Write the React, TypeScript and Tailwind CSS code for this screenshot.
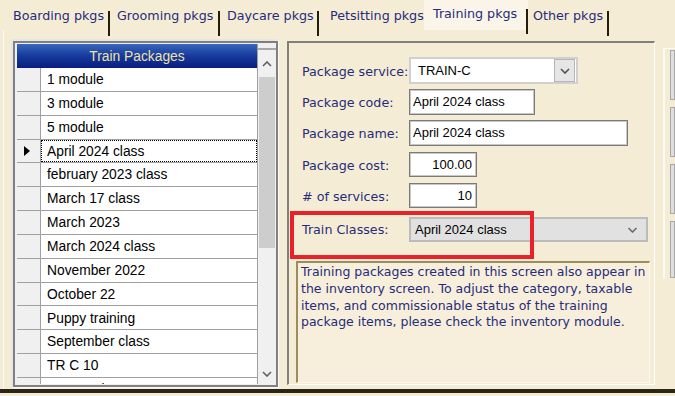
import React from "react";

const tabs = [
  { label: "Boarding pkgs", cls: "w-[110px] pl-[13px] pt-[8px]", sep: true, active: false },
  { label: "Grooming pkgs", cls: "w-[110px] pl-[7px] pt-[8px]", sep: true, active: false },
  { label: "Daycare pkgs", cls: "w-[99px] pl-[7px] pt-[8px]", sep: true, active: false },
  { label: "Petsitting pkgs", cls: "w-[105px] pl-[11px] pt-[8px]", sep: false, active: false },
  { label: "Training pkgs", cls: "w-[104px] pl-[9px] pt-[6px] bg-[#faf5e8]", sep: true, active: true },
  { label: "Other pkgs", cls: "w-[81px] pl-[5px] pt-[8px]", sep: true, active: false },
];

const rows = [
  "1 module",
  "3 module",
  "5 module",
  "April 2024 class",
  "february 2023 class",
  "March 17 class",
  "March 2023",
  "March 2024 class",
  "November 2022",
  "October 22",
  "Puppy training",
  "September class",
  "TR C 10",
  "TR C 1 class",
];

function Chevron({ up = false, className = "" }: { up?: boolean; className?: string }) {
  return (
    <svg width="10" height="6" viewBox="0 0 10 6" className={className}>
      <polyline
        points={up ? "1,5 5,1 9,5" : "1,1 5,5 9,1"}
        fill="none"
        stroke="currentColor"
        strokeWidth="1.6"
      />
    </svg>
  );
}

export default function App() {
  return (
    <div className="w-[675px] h-[396px] overflow-hidden bg-[#f5ecd6] flex flex-col font-['DejaVu_Sans',sans-serif] text-[12.7px] text-[#262c78]">
      {/* Tabs */}
      <div className="h-[30px] flex shrink-0">
        {tabs.map((t) => (
          <div key={t.label} className={`flex h-full leading-[15px] whitespace-nowrap ${t.cls}`}>
            <span className="flex-1">{t.label}</span>
            {t.sep && <span className="w-[2px] h-[25px] mt-[3px] bg-[#241c0c] shrink-0" />}
          </div>
        ))}
      </div>

      {/* Body */}
      <div className="flex h-[359px] shrink-0 border-l border-[#fffaf0] ml-[3px]">
        {/* Grid */}
        <div className="ml-[7px] mt-[9px] w-[268px] h-[349px] border-l-2 border-t-2 border-r border-b border-l-[#e6e6e6] border-t-[#e6e6e6] border-r-[#fafafa] border-b-[#fafafa] shrink-0">
          <div className="h-full border-2 border-[#808080] bg-[#f0f0f0] pl-[2px] pt-[1px] pb-[1px] flex">
            <div className="w-[241px] h-full overflow-hidden flex flex-col font-['Liberation_Sans',Arial,sans-serif] text-[13.8px] text-black">
              <div className="h-[24px] shrink-0 bg-gradient-to-b from-[#3a66bc] via-[#163a9c] to-[#0a1d80] text-[#f0e2a2] flex items-center justify-center pt-[2px] border-r border-[#a0a0a0]">
                Train Packages
              </div>
              {rows.map((r, i) => (
                <div key={r} className="flex h-[23.85px] shrink-0">
                  <div className="w-[24px] bg-[#f0f0f0] border-r border-b border-[#a0a0a0] flex items-center justify-center shrink-0">
                    {i === 3 && (
                      <svg width="6" height="10" viewBox="0 0 6 10" className="-ml-[4px]">
                        <polygon points="0,0 6,5 0,10" fill="#000" />
                      </svg>
                    )}
                  </div>
                  <div className="flex-1 bg-white border-r border-b border-[#a0a0a0] flex items-center">
                    {i === 3 ? (
                      <div className="w-full h-full border border-dotted border-black flex items-center pl-[5px] pt-[2px]">
                        {r}
                      </div>
                    ) : (
                      <span className="pl-[6px] pt-[2px] whitespace-nowrap">{r}</span>
                    )}
                  </div>
                </div>
              ))}
            </div>
            {/* Scrollbar */}
            <div className="w-[18px] h-full flex flex-col bg-[#f0f0f0]">
              <div className="h-[4px] shrink-0" />
              <div className="h-[2px] bg-[#a8a8a8] shrink-0" />
              <div className="h-[27px] shrink-0 flex items-center justify-center text-[#606060]">
                <Chevron up />
              </div>
              <div className="h-[171px] shrink-0 bg-[#cdcdcd] mx-[1px]" />
              <div className="flex-1" />
              <div className="h-[20px] shrink-0 flex items-center justify-center text-[#606060]">
                <Chevron />
              </div>
            </div>
          </div>
        </div>

        {/* Group box */}
        <div className="relative ml-[8px] mt-[11px] w-[368px] h-[344px] border-l-2 border-t-2 border-r border-b border-l-[#808080] border-t-[#808080] border-r-white border-b-white shrink-0 pt-[14px] flex flex-col">
          <div className="flex h-[27px] items-center">
            <span className="w-[120px] pl-[13px] pt-[2px] shrink-0">Package service:</span>
            <div className="w-[169px] h-full border-2 border-[#d0d0d0] bg-white flex items-center font-['Liberation_Sans',Arial,sans-serif] text-[13px] text-black">
              <span className="flex-1 pl-[7px]">TRAIN-C</span>
              <div className="w-[21px] h-full bg-[#e6e6e6] border border-[#b5b5b5] mr-[1px] flex items-center justify-center text-[#505050]">
                <Chevron />
              </div>
            </div>
          </div>
          <div className="flex h-[26px] items-center mt-[5px]">
            <span className="w-[120px] pl-[13px] pt-[2px] shrink-0">Package code:</span>
            <div className="w-[126px] h-full border border-[#7a7a7a] shadow-[inset_0_0_0_1px_#c8c8c8] bg-white flex items-center pl-[3px] font-['Liberation_Sans',Arial,sans-serif] text-[13px] text-black">
              April 2024 class
            </div>
          </div>
          <div className="flex h-[26px] items-center mt-[5px]">
            <span className="w-[120px] pl-[13px] pt-[2px] shrink-0">Package name:</span>
            <div className="w-[219px] h-full border border-[#7a7a7a] shadow-[inset_0_0_0_1px_#c8c8c8] bg-white flex items-center pl-[3px] font-['Liberation_Sans',Arial,sans-serif] text-[13px] text-black">
              April 2024 class
            </div>
          </div>
          <div className="flex h-[25px] items-center mt-[6px]">
            <span className="w-[120px] pl-[13px] pt-[2px] shrink-0">Package cost:</span>
            <div className="w-[68px] h-full border border-[#7a7a7a] shadow-[inset_0_0_0_1px_#c8c8c8] bg-white flex items-center justify-end pr-[4px] font-['Liberation_Sans',Arial,sans-serif] text-[13px] text-black">
              100.00
            </div>
          </div>
          <div className="flex h-[25px] items-center mt-[6px]">
            <span className="w-[120px] pl-[13px] pt-[2px] shrink-0"># of services:</span>
            <div className="w-[68px] h-full border border-[#7a7a7a] shadow-[inset_0_0_0_1px_#c8c8c8] bg-white flex items-center justify-end pr-[4px] font-['Liberation_Sans',Arial,sans-serif] text-[13px] text-black">
              10
            </div>
          </div>
          <div className="flex h-[25px] items-center mt-[9px]">
            <span className="w-[120px] pl-[13px] shrink-0">Train Classes:</span>
            <div className="w-[239px] h-full border-2 border-[#bcbcbc] bg-[#e1e1e1] flex items-center font-['Liberation_Sans',Arial,sans-serif] text-[13px] text-black">
              <span className="flex-1 pl-[4px]">April 2024 class</span>
              <Chevron className="mr-[8px] text-[#6a6a6a] w-[11px]" />
            </div>
          </div>
          <div className="ml-[7px] mt-[19px] w-[354px] h-[122px] border-l-2 border-t-2 border-r border-b border-l-[#9c8d5e] border-t-[#9c8d5e] border-r-[#fdf9ee] border-b-[#fdf9ee] bg-[#f7efdc] pl-[3px] pt-[1px] leading-[16.8px] whitespace-nowrap text-[12.5px]">
            Training packages created in this screen also appear in
            <br />
            the inventory screen. To adjust the category, taxable
            <br />
            items, and commissionable status of the training
            <br />
            package items, please check the inventory module.
          </div>
          {/* red annotation */}
          <div className="absolute left-[1px] top-[168px] w-[244px] h-[48px] border-4 border-[#e8212a]" />
        </div>

        {/* Right column with buttons */}
        <div className="ml-[8px] mt-[18px] h-[231px] flex-1 border-l-2 border-t border-[#fdfaf2] pl-[5px] pt-[1px] flex flex-col gap-[7px]">
          <div className="h-[50px] bg-[#dedede] border border-[#a8a8a8]" />
          <div className="h-[50px] bg-[#dedede] border border-[#a8a8a8]" />
          <div className="h-[50px] bg-[#dedede] border border-[#a8a8a8]" />
          <div className="h-[57px] bg-[#dedede] border border-[#a8a8a8]" />
        </div>
      </div>

      <div className="h-[4px] bg-[#2b2518] shrink-0" />
      <div className="flex-1" />
    </div>
  );
}
